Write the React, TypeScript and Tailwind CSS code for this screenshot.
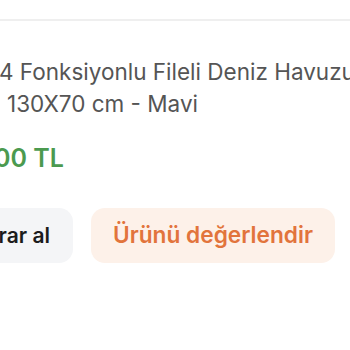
export default function App() {
  return (
    <main
      className="h-[350px] w-[350px] overflow-hidden bg-white"
      style={{ fontFamily: "Inter, 'Noto Sans', sans-serif" }}>
      <div className="h-[19px]" />
      <div className="h-[2px] bg-[#efefef]" />
      <section className="mt-[35px] whitespace-nowrap">
        <h1 className="text-[22.5px] leading-[32px] font-normal text-[#555555]">
          <span className="-ml-[1px] block">4 Fonksiyonlu Fileli Deniz Havuzu</span>
          <span className="block pl-[7px]">130X70 cm - Mavi</span>
        </h1>
        <p className="-ml-[6px] mt-[22px] text-[25px] leading-[32px] font-semibold text-[#4b9a4f]">00 TL</p>
        <div className="mt-[34px] flex gap-[18px]">
          <button className="-ml-[61px] h-[55px] rounded-[14px] bg-[#f4f5f7] px-[23px] text-[21px] font-semibold text-[#1c1c1c]">
            Tekrar al
          </button>
          <button className="h-[55px] rounded-[14px] bg-[#fdf1e9] px-[22px] text-[22.7px] font-semibold text-[#e2743c]">
            Ürünü değerlendir
          </button>
        </div>
      </section>
    </main>
  );
}
